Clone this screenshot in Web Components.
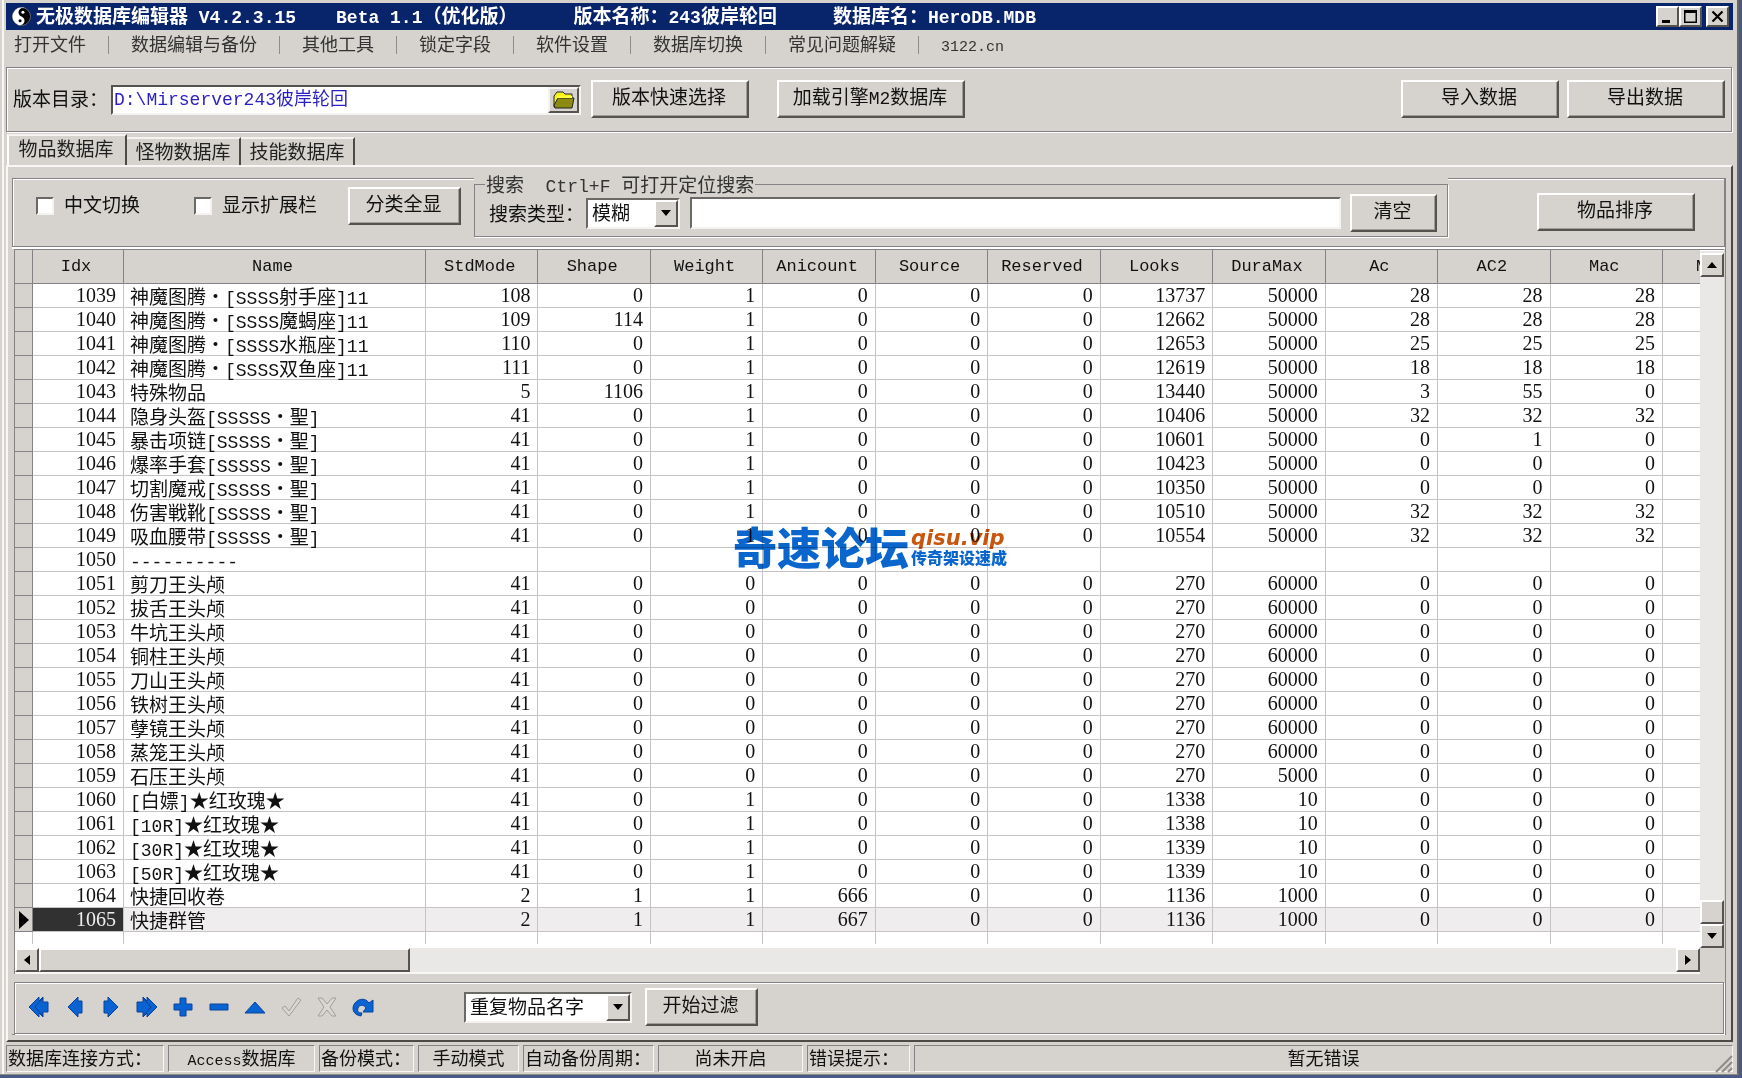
<!DOCTYPE html>
<html lang="zh-CN">
<head>
<meta charset="utf-8">
<title>无极数据库编辑器</title>
<style>
html, body { margin: 0; height: 100%; }
body {
  --face: #d6d3ce; --dark: #848284; --shade: #55534f; --navy: #08246b; --line: #c6c3c6;
  --cjk: "Noto Sans CJK SC", sans-serif;
  --mono: "Liberation Mono", "Noto Sans CJK SC", monospace;
  background: #4a5a85;
  font: 19px/24px var(--cjk);
  color: #111;
  overflow: hidden;
}
</style>
</head>
<body>
<app-window></app-window>
<script>
const base = `
  *, *::before, *::after { box-sizing: border-box; }
  .l { font-family: var(--mono); font-size: var(--latin, 18px); line-height: 0; }
  .dot { display: inline-block; width: 19px; text-align: center; line-height: 0; }
  button, input, select { font: inherit; color: inherit; margin: 0; border-radius: 0; outline: 0; }
`;

/* Half-width runs are set in the monospaced face, the rest in the CJK face. */
const mix = s => s.replace(/[\x20-\x7e]+|·/g, m => m === '·'
  ? '<span class="dot">·</span>'
  : `<span class="l">${m.replace(/&/g, '&amp;').replace(/</g, '&lt;')}</span>`);

const define = (name, render) => customElements.define(name, class extends HTMLElement {
  constructor() { super(); this.attachShadow({ mode: 'open' }); }
  connectedCallback() {
    this.shadowRoot.innerHTML = `<style>${base}</style>` + render(this);
  }
});

define('bevel-button', el => `
  <style>
    :host { display: block; flex: none; width: 158px; height: 38px; }
    :host([size=small]) { width: 87px; }
    :host([size=medium]) { width: 113px; }
    :host([size=large]) { width: 188px; }
    button { width: 100%; height: 100%; padding: 0 2px 6px 0; background: var(--face); white-space: pre;
      border: 2px solid; border-color: #fff var(--shade) var(--shade) #fff; line-height: 24px;
      box-shadow: inset -1px -1px #a19e9a; }
  </style>
  <button type="button">${mix(el.getAttribute('label'))}</button>`);

define('arrow-button', el => `
  <style>
    :host { display: block; flex: none; width: 24px; height: 24px; }
    button { width: 100%; height: 100%; padding: 0; background: var(--face); display: grid; place-items: center;
      border: 2px solid; border-color: #fff var(--shade) var(--shade) #fff; }
    svg { display: block; transform: rotate(${({ up: 180, down: 0, left: 90, right: 270 })[el.getAttribute('dir')]}deg); }
  </style>
  <button type="button" aria-label="${el.getAttribute('dir')}"><svg width="12" height="12"><path d="M1 3H11L6 9Z"/></svg></button>`);

define('drop-down', el => `
  <style>
    :host { display: grid; flex: none; width: 94px; height: 31px; background: #fff;
      border: 2px solid; border-color: #6b6966 #f4f3f1 #f4f3f1 #6b6966; }
    :host([wide]) { width: 168px; }
    select, arrow-button { grid-area: 1 / 1; }
    select { appearance: none; border: 0; background: transparent; padding: 0 0 3px 4px; width: 100%; height: 100%; line-height: 24px; }
    arrow-button { justify-self: end; height: 100%; pointer-events: none; }
  </style>
  <select aria-label="${el.getAttribute('name')}"><option>${el.getAttribute('value')}</option></select>
  <arrow-button dir="down"></arrow-button>`);

define('check-box', el => `
  <style>
    :host { display: block; flex: none; }
    label { display: flex; align-items: center; gap: 10px; }
    input { appearance: none; width: 18px; height: 18px; background: #fff; flex: none;
      border: 2px solid; border-color: #6b6966 #f4f3f1 #f4f3f1 #6b6966; }
    span { padding-bottom: 4px; }
  </style>
  <label><input type="checkbox"><span>${el.getAttribute('label')}</span></label>`);

define('title-bar', () => `
  <style>
    :host { display: flex; align-items: center; flex: none; height: 27px; background: var(--navy); color: #fff; font-weight: 700; padding: 0 4px 0 6px; }
    svg { display: block; flex: none; }
    .t { margin-left: 5px; white-space: pre; line-height: 24px; padding-bottom: 3px; }
    .t + .t { margin-left: 40px; }
    .t + .t.w { margin-left: 56px; }
    .box { display: flex; margin-left: auto; }
    button { width: 23px; height: 21px; padding: 0; background: var(--face); border: 2px solid; border-color: #fff var(--shade) var(--shade) #fff; display: grid; place-items: center; }
    button:last-child { margin-left: 4px; }
  </style>
  <svg width="19" height="19" viewBox="0 0 20 20"><circle cx="10" cy="10" r="9.500" fill="#050505" stroke="#667"/><path d="M10 .5a9.500 9.500 0 0 0 0 19a4.700 4.700 0 0 0 0-9.500a4.700 4.700 0 0 1 0-9.500Z" fill="#fff" transform="rotate(20 10 10)"/><circle cx="11.500" cy="5.500" r="1.600" fill="#fff"/><circle cx="8.500" cy="14.500" r="1.600"/></svg>
  <span class="t">${mix('无极数据库编辑器 V4.2.3.15')}</span>
  <span class="t">${mix('Beta 1.1（优化版）')}</span>
  <span class="t w">${mix('版本名称：243彼岸轮回')}</span>
  <span class="t w">${mix('数据库名：HeroDB.MDB')}</span>
  <div class="box">
    <button type="button" aria-label="最小化"><svg width="15" height="15"><path d="M2 11h8v3H2z"/></svg></button>
    <button type="button" aria-label="最大化"><svg width="15" height="15"><path d="M1 1h13v13H1zM2.500 4v8.500h10V4z" fill-rule="evenodd"/></svg></button>
    <button type="button" aria-label="关闭"><svg width="15" height="15"><path d="M2.500 2.500l10 10M12.500 2.500l-10 10" stroke="#000" stroke-width="2.200"/></svg></button>
  </div>`);

define('menu-bar', () => `
  <style>
    :host { display: flex; align-items: center; flex: none; height: 30px; margin-bottom: 7px; padding-left: 8px; font-size: 18px; --latin: 15px; color: #333; }
    button { background: none; border: 0; padding: 0 0 4px; line-height: 24px; }
    i { width: 1px; height: 18px; background: #8f8c88; margin: 0 22px; }
  </style>
  ${['打开文件', '数据编辑与备份', '其他工具', '锁定字段', '软件设置', '数据库切换', '常见问题解疑', '3122.cn']
    .map(t => `<button type="button">${mix(t)}</button>`).join('<i></i>')}`);

define('path-bar', () => `
  <style>
    :host { display: flex; align-items: center; flex: none; height: 65px; padding: 0 6px; margin: 0 1px 1px 0;
      border: 1px solid var(--dark); box-shadow: inset 1px 1px #fff, 1px 1px #fff; }
    label { flex: none; width: 98px; padding-bottom: 4px; }
    .field { display: flex; flex: none; width: 470px; height: 30px; background: #fff; border: 2px solid; border-color: #55534f #f4f3f1 #f4f3f1 #55534f; margin-right: 10px; }
    input { flex: 1; min-width: 0; border: 0; padding: 0 1px; background: none; color: #2a1fc4; font: 18px/24px var(--mono); }
    .field button { width: 31px; height: 26px; padding: 0; background: var(--face); border: 2px solid; border-color: #f4f3f1 var(--shade) var(--shade) #f4f3f1; display: grid; place-items: center; }
    .second { margin-left: 28px; }
    .right { display: flex; gap: 8px; margin-left: auto; }
    bevel-button { margin-bottom: 2px; }
    svg { display: block; }
  </style>
  <label for="dir">版本目录：</label>
  <div class="field">
    <input id="dir" type="text" value="D:\\Mirserver243彼岸轮回">
    <button type="button" aria-label="浏览"><svg width="24" height="20"><path d="M2 17V6l3-4h6l2 2h7v5H6l-3 8Z" fill="#f7f31a" stroke="#222"/><path d="M6 8h16l-2 10H3l-1-3Z" fill="#8c8a10" stroke="#222"/><path d="M5 7h15" stroke="#ff3" stroke-width="2"/></svg></button>
  </div>
  <bevel-button label="版本快速选择"></bevel-button>
  <bevel-button class="second" size="large" label="加载引擎M2数据库"></bevel-button>
  <div class="right">
    <bevel-button label="导入数据"></bevel-button>
    <bevel-button label="导出数据"></bevel-button>
  </div>`);

define('tab-strip', () => `
  <style>
    :host { display: flex; align-items: flex-end; flex: none; height: 32px; padding-left: 1px; }
    button { height: 28px; width: 114px; padding: 0 0 2px; line-height: 24px; background: var(--face); border: 0; text-align: center; white-space: nowrap;
      border-top: 2px solid #f4f3f1; border-right: 2px solid #4c4a47; color: #222; }
    button[aria-selected=true] { height: 31px; width: 120px; padding: 0 2px 6px 0; border-left: 2px solid #fff; }
  </style>
  <button type="button" role="tab" aria-selected="true">物品数据库</button>
  <button type="button" role="tab">怪物数据库</button>
  <button type="button" role="tab">技能数据库</button>`);

define('filter-bar', () => `
  <style>
    :host { display: flex; flex: none; height: 69px; border: solid var(--dark); border-width: 0 1px 1px; box-shadow: 0 2px #fff, inset 1px 0 #fff; }
    .left, .right { display: flex; border-top: 1px solid var(--dark); box-shadow: inset 0 1px #fff; }
    .left { width: 461px; padding: 8px 13px 0 23px; flex: none; }
    .left check-box { margin-top: 5px; }
    .left check-box + check-box { margin-left: 54px; }
    .left bevel-button { margin-left: auto; }
    fieldset { flex: 1; min-width: 0; display: flex; align-items: center; margin: 0 0 9px; padding: 0 10px 0 14px;
      border: 1px solid var(--dark); box-shadow: 1px 1px #fff; }
    legend { padding: 0 1px; margin-left: -4px; white-space: pre; height: 12px; line-height: 12px; color: #333; }
    label { flex: none; width: 97px; }
    input { flex: 1; min-width: 0; height: 32px; background: #fff; border: 2px solid; border-color: #6b6966 #f4f3f1 #f4f3f1 #6b6966; margin: 0 9px 0 10px; padding: 0 4px; }
    .right { width: 276px; flex: none; justify-content: flex-end; padding: 14px 29px 0 0; }
  </style>
  <div class="left">
    <check-box label="中文切换"></check-box>
    <check-box label="显示扩展栏"></check-box>
    <bevel-button size="medium" label="分类全显"></bevel-button>
  </div>
  <fieldset>
    <legend>${mix('搜索  Ctrl+F 可打开定位搜索')}</legend>
    <label for="q">搜索类型：</label>
    <drop-down name="搜索类型" value="模糊"></drop-down>
    <input id="q" type="text">
    <bevel-button size="small" label="清空"></bevel-button>
  </fieldset>
  <div class="right"><bevel-button label="物品排序"></bevel-button></div>`);

const heads = ['Idx', 'Name', 'StdMode', 'Shape', 'Weight', 'Anicount', 'Source', 'Reserved', 'Looks', 'DuraMax', 'Ac', 'AC2', 'Mac', 'Mac2'];
const rows = [
  ['神魔图腾·[SSSS射手座]11', 108, 0, 1, 0, 0, 0, 13737, 50000, 28, 28, 28],
  ['神魔图腾·[SSSS魔蝎座]11', 109, 114, 1, 0, 0, 0, 12662, 50000, 28, 28, 28],
  ['神魔图腾·[SSSS水瓶座]11', 110, 0, 1, 0, 0, 0, 12653, 50000, 25, 25, 25],
  ['神魔图腾·[SSSS双鱼座]11', 111, 0, 1, 0, 0, 0, 12619, 50000, 18, 18, 18],
  ['特殊物品', 5, 1106, 1, 0, 0, 0, 13440, 50000, 3, 55, 0],
  ['隐身头盔[SSSSS·聖]', 41, 0, 1, 0, 0, 0, 10406, 50000, 32, 32, 32],
  ['暴击项链[SSSSS·聖]', 41, 0, 1, 0, 0, 0, 10601, 50000, 0, 1, 0],
  ['爆率手套[SSSSS·聖]', 41, 0, 1, 0, 0, 0, 10423, 50000, 0, 0, 0],
  ['切割魔戒[SSSSS·聖]', 41, 0, 1, 0, 0, 0, 10350, 50000, 0, 0, 0],
  ['伤害戦靴[SSSSS·聖]', 41, 0, 1, 0, 0, 0, 10510, 50000, 32, 32, 32],
  ['吸血腰带[SSSSS·聖]', 41, 0, 1, 0, 0, 0, 10554, 50000, 32, 32, 32],
  ['----------', '', '', '', '', '', '', '', '', '', '', ''],
  ...['剪刀', '拔舌', '牛坑', '铜柱', '刀山', '铁树', '孽镜', '蒸笼', '石压'].map((n, i) =>
    [n + '王头颅', 41, 0, 0, 0, 0, 0, 270, i === 8 ? 5000 : 60000, 0, 0, 0]),
  ['[白嫖]★红玫瑰★', 41, 0, 1, 0, 0, 0, 1338, 10, 0, 0, 0],
  ['[10R]★红玫瑰★', 41, 0, 1, 0, 0, 0, 1338, 10, 0, 0, 0],
  ['[30R]★红玫瑰★', 41, 0, 1, 0, 0, 0, 1339, 10, 0, 0, 0],
  ['[50R]★红玫瑰★', 41, 0, 1, 0, 0, 0, 1339, 10, 0, 0, 0],
  ['快捷回收卷', 2, 1, 1, 666, 0, 0, 1136, 1000, 0, 0, 0],
  ['快捷群管', 2, 1, 1, 667, 0, 0, 1136, 1000, 0, 0, 0]
];

define('site-mark', () => `
  <style>
    :host { display: flex; align-items: center; gap: 2px; color: #0a66cc; font-weight: 900; mix-blend-mode: multiply; pointer-events: none; }
    b { font-size: 44px; line-height: 40px; font-weight: 900; white-space: nowrap; }
    div { display: flex; flex-direction: column; padding-top: 2px; }
    i { color: #c8560c; font: italic 700 21px/20px "DejaVu Sans", sans-serif; }
    span { font-size: 16px; line-height: 18px; white-space: nowrap; }
  </style>
  <b>奇速论坛</b><div><i>qisu.vip</i><span>传奇架设速成</span></div>`);

define('data-grid', () => `
  <style>
    :host { display: grid; grid-template-columns: minmax(0, 1fr) 24px; grid-template-rows: 1fr 26px; flex: 1;
      border-top: 1px solid var(--dark); border-left: 1px solid var(--dark); margin: 0 1px 0 2px; }
    .view { position: relative; background: #fff; overflow: hidden; }
    table { width: 100%; table-layout: fixed; border-collapse: separate; border-spacing: 0; }
    th, td { padding: 0; white-space: nowrap; font-weight: 400; }
    th { height: 34px; background: var(--face); border: solid var(--dark); border-width: 0 1px 1px 0; padding-right: 4px; font: 17px/24px var(--mono); }
    th:last-child { text-align: left; padding: 0 0 0 33px; border-right: 0; overflow: hidden; }
    td { height: 24px; line-height: 23px; border: solid var(--line); border-width: 0 1px 1px 0; text-align: right; padding-right: 7px; font-family: "Liberation Serif", serif; font-size: 20px; }
    td:first-child { background: var(--face); border-color: var(--dark); padding: 0; }
    td:nth-child(3) { text-align: left; padding: 0 0 0 6px; font-family: var(--cjk); font-size: 19px; }
    td:last-child { border-right: 0; }
    .cur td { background: #efedee; }
    .cur td:first-child { background: var(--face); }
    .cur td:nth-child(2) { background: #313131; color: #eee; }
    .cur svg { display: block; margin-left: 4px; }
    .end td, .end td:first-child { height: 12px; background: #fff; border-bottom: 0; border-color: var(--line); line-height: 11px; }
    .v { display: flex; flex-direction: column; background: #e9e8e6; padding-top: 2px; border-top: 1px solid #fff; }
    .v .thumb { margin-top: auto; height: 24px; }
    .h { display: flex; background: #e9e8e6; border-bottom: 2px solid #f8f7f5; }
    .h .thumb { width: 22%; }
    .h arrow-button:last-child { margin-left: auto; }
    .thumb { background: var(--face); border: 2px solid; border-color: #fff var(--shade) var(--shade) #fff; }
    .corner { background: var(--face); }
    site-mark { position: absolute; left: 718px; top: 276px; }
  </style>
  <div class="view">
    <table>
      <colgroup><col style="width:18px"><col style="width:91px"><col style="width:302px">${'<col>'.repeat(11)}<col style="width:37px"></colgroup>
      <thead><tr><th></th>${heads.map(h => `<th>${h}</th>`).join('')}</tr></thead>
      <tbody>
        ${rows.map((r, i) => {
          const cur = i === rows.length - 1;
          return `<tr class="${cur ? 'cur' : ''}"><td>${cur ? '<svg width="11" height="18"><path d="M0 0L10 9L0 18Z"/></svg>' : ''}</td><td>${1039 + i}</td><td>${mix(r[0])}</td>${r.slice(1).map(c => `<td>${c}</td>`).join('')}<td></td></tr>`;
        }).join('')}
        <tr class="end">${'<td></td>'.repeat(15)}</tr>
      </tbody>
    </table>
    <site-mark></site-mark>
  </div>
  <div class="v"><arrow-button dir="up"></arrow-button><div class="thumb"></div><arrow-button dir="down"></arrow-button></div>
  <div class="h"><arrow-button dir="left"></arrow-button><div class="thumb"></div><arrow-button dir="right"></arrow-button></div>
  <div class="corner"></div>`);

const navIcons = [
  ['首条', '<path d="M1 11L11 1v4l4-4v5h5v10h-5v5l-4-4v4Z"/><path d="M7 11l8-9M7 11l8 9" fill="none"/>'],
  ['上一条', '<path d="M4 11L14 1v4h4v12h-4v4Z"/>'],
  ['下一条', '<path d="M18 11L8 1v4H4v12h4v4Z"/>'],
  ['末条', '<path d="M21 11L11 1v4L7 1v5H1v10h6v5l4-4v4Z"/><path d="M15 11L7 2M15 11l-8 9" fill="none"/>'],
  ['添加', '<path d="M8 2h6v6h6v6h-6v6H8v-6H2V8h6Z"/>'],
  ['删除', '<path d="M2 8h18v6H2Z"/>'],
  ['编辑', '<path d="M1 17L11 6l10 11Z"/>'],
  ['提交', '<path d="M2 12l3-2 4 5L18 2l3 2L9 20Z"/>', 1],
  ['取消', '<path d="M2 2h4l5 6 5-6h4l-6 9 6 9h-4l-5-6-5 6H2l6-9Z"/>', 1],
  ['刷新', '<path d="M9 20C1 19-1 12 3 7s11-5 14 0l4-3v12H11l3-4c-2-4-7-3-8 0s0 5 4 5Z"/>']
];
define('record-bar', () => `
  <style>
    :host { display: flex; align-items: center; flex: none; height: 52px; margin: 8px 1px 0 2px; padding: 0 12px 2px 13px; border: 1px solid var(--dark);
      box-shadow: inset 1px 1px #fff, 1px 1px #fff; }
    nav { display: flex; gap: 14px; margin-right: 90px; }
    nav button { width: 22px; height: 22px; padding: 0; border: 0; background: none; }
    svg { display: block; fill: #0a63d2; stroke: #08429a; }
    .off svg { fill: #d9d7d3; stroke: #a09e9b; }
    drop-down { margin-right: 13px; }
  </style>
  <nav>${navIcons.map(([n, p, off]) => `<button type="button" aria-label="${n}" class="${off ? 'off' : ''}"><svg width="22" height="22">${p}</svg></button>`).join('')}</nav>
  <drop-down wide name="过滤方式" value="重复物品名字"></drop-down>
  <bevel-button size="medium" label="开始过滤"></bevel-button>`);

define('status-bar', () => `
  <style>
    :host { display: flex; gap: 4px; flex: none; height: 28px; margin-top: 3px; font-size: 18px; --latin: 15px; }
    .s { flex: none; height: 27px; border: 1px solid; border-color: var(--dark) #f8f7f5 #f8f7f5 var(--dark); line-height: 23px; white-space: nowrap; padding-left: 1px; }
    .c { text-align: center; padding: 0; }
    .grow { flex: 1; }
    .w1 { width: 158px; } .w2 { width: 147px; } .w3 { width: 95px; } .w4 { width: 101px; } .w5 { width: 131px; } .w6 { width: 145px; } .w7 { width: 103px; }
    svg { display: block; align-self: flex-end; margin-left: -22px; stroke: #8f8c88; stroke-width: 2; }
  </style>
  <span class="s w1">数据库连接方式：</span><span class="s c w2">${mix('Access数据库')}</span>
  <span class="s w3">备份模式：</span><span class="s c w4">手动模式</span>
  <span class="s w5">自动备份周期：</span><span class="s c w6">尚未开启</span>
  <span class="s w7">错误提示：</span><span class="s c grow">暂无错误</span>
  <svg width="18" height="18"><path d="M1 17L17 1M7 17L17 7M13 17l4-4"/></svg>`);

define('app-window', () => `
  <style>
    :host { display: flex; flex-direction: column; min-height: calc(100vh - 3px); margin-right: 3px; background: var(--face);
      padding: 3px 4px 1px 6px; border-right: 2px solid #6b6966; border-bottom: 1px solid #8f8c88; box-shadow: inset 2px 0 #d6d3ce, inset 4px 0 #f8f7f5; box-sizing: border-box; }
    .page { flex: 1; display: flex; flex-direction: column; border: 2px solid; border-color: #f8f7f5 #4c4a47 #4c4a47 #f8f7f5; padding: 11px 5px 5px 4px; }
    .sheet { flex: 1; display: flex; flex-direction: column; border: solid; border-width: 0 1px 1px 0; border-color: var(--dark); }
    data-grid { margin-top: 2px; }
  </style>
  <title-bar></title-bar>
  <menu-bar></menu-bar>
  <path-bar></path-bar>
  <tab-strip></tab-strip>
  <main class="page">
    <div class="sheet">
      <filter-bar></filter-bar>
      <data-grid></data-grid>
      <record-bar></record-bar>
    </div>
  </main>
  <status-bar></status-bar>`);
</script>
</body>
</html>
